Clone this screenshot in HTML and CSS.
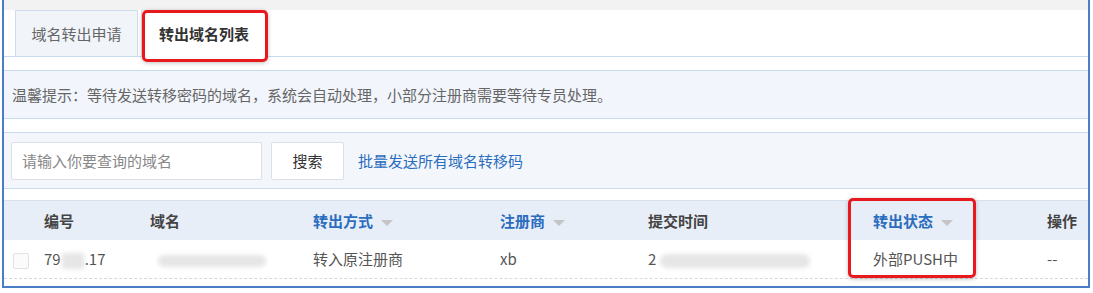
FILE: index.html
```html
<!DOCTYPE html>
<html lang="zh-CN">
<head>
    <meta charset="UTF-8">
    <title>转出域名列表</title>
    <link rel="stylesheet" href="styles.css">
</head>
<body>
    <div class="frame">
        <div class="topband"></div>
        <div class="tabs">
            <div class="tab">域名转出申请</div>
            <div class="tab active">转出域名列表</div>
        </div>
        <div class="notice">温馨提示：等待发送转移密码的域名，系统会自动处理，小部分注册商需要等待专员处理。</div>
        <div class="searchbar">
            <input class="search-input" type="text" placeholder="请输入你要查询的域名">
            <button class="search-btn">搜索</button>
            <a class="batch-link" href="#">批量发送所有域名转移码</a>
        </div>
        <div class="table">
            <div class="row head">
                <div class="c c-id">编号</div>
                <div class="c c-domain">域名</div>
                <div class="c c-way sort">转出方式<span class="caret"></span></div>
                <div class="c c-reg sort">注册商<span class="caret"></span></div>
                <div class="c c-time">提交时间</div>
                <div class="c c-status sort">转出状态<span class="caret"></span></div>
                <div class="c c-op">操作</div>
            </div>
            <div class="row body">
                <div class="c c-check"><span class="checkbox"></span></div>
                <div class="c c-id">79<span class="smudge smudge-id"></span>.17</div>
                <div class="c c-domain"><span class="smudge smudge-domain"></span></div>
                <div class="c c-way">转入原注册商</div>
                <div class="c c-reg">xb</div>
                <div class="c c-time">2<span class="smudge smudge-time"></span></div>
                <div class="c c-status">外部PUSH中</div>
                <div class="c c-op">--</div>
            </div>
        </div>
        <!-- red highlight marks -->
        <div class="mark mark-tab"></div>
        <div class="mark mark-status"></div>
    </div>
</body>
</html>
```

FILE: styles.css
```css
body {
    margin: 0;
    background: #fff;
    font-family: "Noto Sans CJK SC", "Noto Sans", sans-serif;
    color: #555;
}

.frame {
    position: relative;
    margin-left: 2px;
    width: 1084px;
    height: 286px;
    border: 2px solid #4a7dc6;
    border-top: none;
    overflow: hidden;
}

.topband {
    height: 10px;
    background: #f2f2f2;
}

.tabs {
    display: flex;
    padding-left: 11px;
    height: 46px;
    border-bottom: 1px solid #c9d9ee;
}

.tab {
    width: 123px;
    height: 46px;
    box-sizing: border-box;
    border: 1px solid #cfdcec;
    border-bottom: none;
    background: #f1f4f9;
    font-size: 15px;
    line-height: 46px;
    text-align: center;
    color: #666;
}

.tab.active {
    width: 126px;
    margin-left: 3px;
    background: #fff;
    color: #333;
    font-weight: bold;
    height: 47px;
    border-color: #e4e4e4;
}

.notice {
    margin-top: 13px;
    height: 47px;
    border-top: 1px solid #c9d9ee;
    border-bottom: 1px solid #c9d9ee;
    background: #f2f6fc;
    padding-left: 8px;
    font-size: 15px;
    line-height: 47px;
    color: #666;
}

.searchbar {
    margin-top: 13px;
    height: 55px;
    border-top: 1px solid #c9d9ee;
    border-bottom: 1px solid #c9d9ee;
    background: #f3f7fc;
    display: flex;
    align-items: center;
    padding-left: 7px;
}

.search-input {
    width: 251px;
    height: 38px;
    box-sizing: border-box;
    border: 1px solid #dcdfe4;
    border-radius: 2px;
    padding: 0 10px;
    font-family: inherit;
    font-size: 15px;
    color: #333;
    background: #fff;
    outline: none;
}

.search-input::placeholder {
    color: #888;
}

.search-btn {
    margin-left: 9px;
    width: 73px;
    height: 38px;
    border: 1px solid #dcdfe4;
    border-radius: 2px;
    background: #fff;
    font-family: inherit;
    font-size: 15px;
    color: #333;
}

.batch-link {
    margin-left: 14px;
    font-size: 15px;
    color: #2b6dbf;
    text-decoration: none;
}

.table {
    margin-top: 11px;
}

.row {
    position: relative;
    height: 39px;
    font-size: 15px;
}

.row.head {
    background: #e8eef7;
    border-top: 1px solid #d6e1ef;
    font-weight: bold;
    color: #444;
}

.row.body {
    height: 38px;
    border-bottom: 1px dashed #d8d8d8;
    color: #555;
}

.c {
    position: absolute;
    top: 0;
    line-height: 39px;
    white-space: nowrap;
}

.row.body .c {
    line-height: 38px;
}

.c-check { left: 9px; }
.c-id { left: 40px; }
.c-domain { left: 146px; }
.c-way { left: 309px; }
.c-reg { left: 496px; }
.c-time { left: 644px; }
.c-status { left: 869px; }
.c-op { left: 1043px; }

.sort {
    color: #2b6dbf;
}

.caret {
    display: inline-block;
    margin-left: 8px;
    vertical-align: middle;
    border-left: 6px solid transparent;
    border-right: 6px solid transparent;
    border-top: 6px solid #c4c4c4;
}

.checkbox {
    display: inline-block;
    width: 14px;
    height: 14px;
    border: 1px solid #e2e2e2;
    border-radius: 2px;
    vertical-align: middle;
    background: #fbfbfb;
}

.smudge {
    display: inline-block;
    vertical-align: middle;
    background: #e6e6e6;
    filter: blur(2px);
}

.smudge-id {
    width: 22px;
    height: 16px;
    margin: 0 1px;
}

.smudge-domain {
    width: 108px;
    height: 12px;
    border-radius: 6px;
    margin-left: 8px;
}

.smudge-time {
    width: 150px;
    height: 14px;
    border-radius: 7px;
    margin-left: 4px;
}

.mark {
    position: absolute;
    border: 3px solid #e8191c;
    border-radius: 5px;
    box-shadow: 0 1px 4px rgba(0, 0, 0, 0.25);
}

.mark-tab {
    left: 138px;
    top: 10px;
    width: 120px;
    height: 46px;
}

.mark-status {
    left: 844px;
    top: 198px;
    width: 122px;
    height: 74px;
}
```
